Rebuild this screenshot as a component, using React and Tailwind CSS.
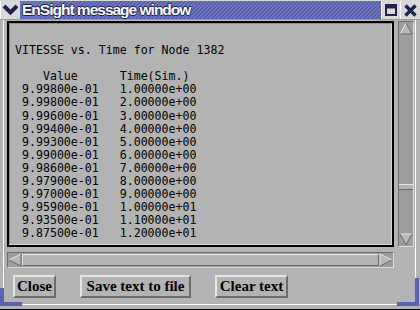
import React from "react";

const rows = [
  ["9.99800e-01", "1.00000e+00"],
  ["9.99800e-01", "2.00000e+00"],
  ["9.99600e-01", "3.00000e+00"],
  ["9.99400e-01", "4.00000e+00"],
  ["9.99300e-01", "5.00000e+00"],
  ["9.99000e-01", "6.00000e+00"],
  ["9.98600e-01", "7.00000e+00"],
  ["9.97900e-01", "8.00000e+00"],
  ["9.97000e-01", "9.00000e+00"],
  ["9.95900e-01", "1.00000e+01"],
  ["9.93500e-01", "1.10000e+01"],
  ["9.87500e-01", "1.20000e+01"],
];

const text = [
  "",
  "VITESSE vs. Time for Node 1382",
  "",
  "    Value      Time(Sim.)",
  ...rows.map(([a, b]) => " " + a + "   " + b),
].join("\n");

function Btn({ children, w }) {
  return (
    <div
      className={`${w} h-[23px] border-2 border-t-[#e4e4e4] border-l-[#e4e4e4] border-b-[#6c6c6c] border-r-[#6c6c6c] flex items-center justify-center text-black font-bold text-[15px] leading-none [font-family:'Liberation_Serif',serif]`}
    >
      {children}
    </div>
  );
}

export default function App() {
  return (
    <div className="w-[420px] h-[310px] bg-[#b3b3b3] flex flex-col overflow-hidden relative">
      {/* Title bar */}
      <div className="h-[20px] flex border-t border-[#d8d8d8] border-b border-b-[#9a9a9a]">
        <div className="w-[20px] h-full bg-[#d9d9d9] border-l border-white flex items-center justify-center">
          <svg width="19" height="18" viewBox="0 0 19 18">
            <polyline points="3,5 9.5,11.5 16,5" fill="none" stroke="#1c2455" strokeWidth="4" strokeLinejoin="miter" />
          </svg>
        </div>
        <div className="flex-1 h-full bg-[repeating-linear-gradient(135deg,#5860aa_0px,#5860aa_1.4px,#6e76bd_1.4px,#6e76bd_2.83px)] flex items-center pl-[2px]">
          <span className="text-white font-bold text-[15.5px] tracking-[-1px] leading-none [font-family:'Liberation_Sans',sans-serif] [text-shadow:1px_0_0_#1c2455,0_1px_0_#1c2455,-1px_0_0_#1c2455,0_-1px_0_#1c2455]">
            EnSight message window
          </span>
        </div>
        <div className="w-[19px] h-full bg-[#d9d9d9] border-l border-white flex items-center justify-center">
          <svg width="12" height="12" viewBox="0 0 12 12">
            <rect x="1" y="1" width="10" height="10" fill="none" stroke="#1c2455" strokeWidth="2" />
            <rect x="1" y="1" width="10" height="3.5" fill="#1c2455" />
          </svg>
        </div>
        <div className="w-[20px] h-full bg-[#d9d9d9] border-l border-white flex items-center justify-center">
          <svg width="13" height="13" viewBox="0 0 13 13">
            <path d="M1.5 1.5 L11.5 11.5 M11.5 1.5 L1.5 11.5" stroke="#1c2455" strokeWidth="3.4" />
          </svg>
        </div>
      </div>

      {/* Body */}
      <div className="flex-1 pl-[3px] pr-[4px] pb-[5px] flex flex-col">
        <div className="flex-1 border-l border-r border-b border-white flex flex-col pl-[3px] pr-[1px]">
          {/* text + vscroll */}
          <div className="flex gap-[4px] pt-[1px]">
            <div className="w-[387px] h-[226px] border-2 border-black">
              <div className="w-full h-full border border-t-[#8c8c8c] border-l-[#8c8c8c] border-b-[#d6d6d6] border-r-[#d6d6d6] pl-[5px] pt-[7px]">
                <pre className="m-0 text-black text-[11.6px] leading-[13.1px] [font-family:'DejaVu_Sans_Mono',monospace]">{text}</pre>
              </div>
            </div>
            <div className="w-[16px] h-[226px] bg-[#9d9d9d] border border-t-[#6e6e6e] border-l-[#6e6e6e] border-b-[#dcdcdc] border-r-[#dcdcdc] flex flex-col justify-between">
              <svg width="14" height="13" viewBox="0 0 14 13">
                <polygon points="7,1 13,12 1,12" fill="#b8b8b8" />
                <polyline points="1,12 7,1" fill="none" stroke="#e8e8e8" strokeWidth="1" />
                <polyline points="7,1 13,12 1,12" fill="none" stroke="#6a6a6a" strokeWidth="1" />
              </svg>
              <div className="flex flex-col">
                <div className="h-[6px] bg-[#b3b3b3] border-t border-t-[#e6e6e6] border-b border-b-[#6a6a6a] mb-[43px]" />
                <svg width="14" height="13" viewBox="0 0 14 13">
                  <polygon points="1,1 13,1 7,12" fill="#b8b8b8" />
                  <polyline points="1,1 13,1" fill="none" stroke="#e8e8e8" strokeWidth="1" />
                  <polyline points="1,1 7,12 13,1" fill="none" stroke="#6a6a6a" strokeWidth="1" />
                </svg>
              </div>
            </div>
          </div>

          {/* hscroll */}
          <div className="mt-[5px] w-[387px] h-[16px] bg-[#9d9d9d] border border-t-[#6e6e6e] border-l-[#6e6e6e] border-b-[#dcdcdc] border-r-[#dcdcdc] flex items-center">
            <svg width="14" height="14" viewBox="0 0 14 14">
              <polygon points="1,7 13,1 13,13" fill="#b8b8b8" />
              <polyline points="13,1 1,7" fill="none" stroke="#e8e8e8" strokeWidth="1" />
              <polyline points="1,7 13,13 13,1" fill="none" stroke="#6a6a6a" strokeWidth="1" />
            </svg>
            <div className="flex-1 h-[12px] bg-[#b3b3b3] border border-t-[#e6e6e6] border-l-[#e6e6e6] border-b-[#6a6a6a] border-r-[#6a6a6a]" />
            <svg width="14" height="14" viewBox="0 0 14 14">
              <polygon points="1,1 13,7 1,13" fill="#b8b8b8" />
              <polyline points="1,13 1,1 13,7" fill="none" stroke="#e8e8e8" strokeWidth="1" />
              <polyline points="13,7 1,13" fill="none" stroke="#6a6a6a" strokeWidth="1" />
            </svg>
          </div>

          {/* buttons */}
          <div className="mt-[7px] flex pl-[6px] gap-[24px]">
            <Btn w="w-[43px]">Close</Btn>
            <Btn w="w-[111px]">Save text to file</Btn>
            <Btn w="w-[73px]">Clear text</Btn>
          </div>
        </div>
      </div>
      <div className="absolute left-0 bottom-0 w-full h-px bg-black" />
      {/* blue resize corners */}
      <div className="absolute left-0 top-[288px] w-[4px] h-[18px] bg-[#5a62b4]" />
      <div className="absolute left-0 top-[302px] w-[22px] h-[4px] bg-[#5a62b4]" />
      <div className="absolute right-[1px] top-[278px] w-[4px] h-[28px] bg-[#5a62b4]" />
      <div className="absolute right-[1px] top-[302px] w-[22px] h-[4px] bg-[#5a62b4]" />
    </div>
  );
}
